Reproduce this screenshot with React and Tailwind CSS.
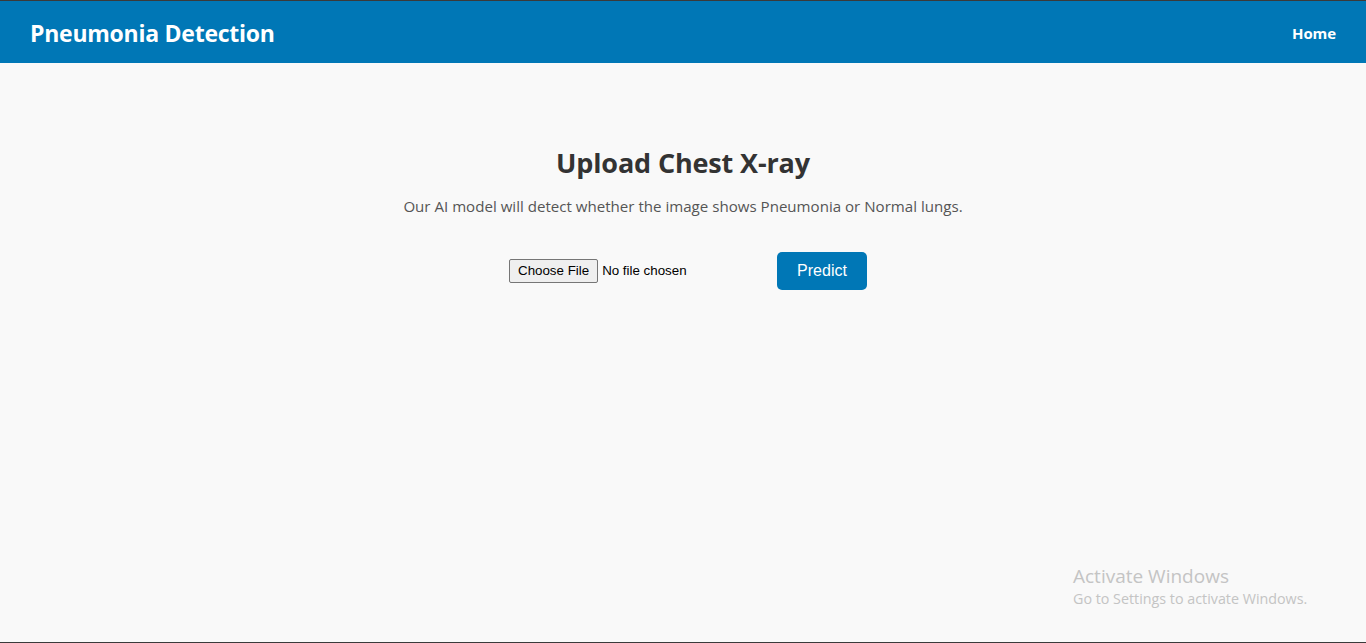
export default function App() {
  return (
    <div
      className="relative flex h-[643px] flex-col overflow-hidden border-t border-b border-[#3a3a3a] bg-[#f9f9f9]"
      style={{ fontFamily: '"Open Sans", "Noto Sans", sans-serif' }}
    >
      {/* Navbar */}
      <nav className="flex h-[62px] items-center justify-between bg-[#0077b6] px-[30px] pt-[2px] text-white">
        <h1 className="text-[23px] font-bold tracking-[-0.25px]">Pneumonia Detection</h1>
        <a href="#" className="text-[15px] font-bold tracking-[-0.1px]">Home</a>
      </nav>

      {/* Main */}
      <main className="flex flex-col items-center pt-[80px] text-center">
        <h2 className="text-[27px] font-bold leading-[40px] tracking-[-0.15px] text-[#333333]">Upload Chest X-ray</h2>
        <p className="mt-[12px] text-[15.1px] text-[#555555]">
          Our AI model will detect whether the image shows Pneumonia or Normal lungs.
        </p>

        <form className="mt-[34px] flex items-center pl-[10px]" onSubmit={(e) => e.preventDefault()}>
          <input
            type="file"
            className="w-[250px] text-[13.33px] text-black file:mr-[4px] file:rounded-[2px] file:border file:border-[#767676] file:bg-[#efefef] file:px-[8px] file:py-[1px] file:text-[13.33px] file:text-black"
            style={{ fontFamily: '"Liberation Sans", Arial, sans-serif' }}
          />
          <button
            type="submit"
            className="ml-[18px] h-[38px] w-[90px] rounded-[5px] bg-[#0077b6] text-[16px] text-white"
            style={{ fontFamily: '"Liberation Sans", Arial, sans-serif' }}
          >
            Predict
          </button>
        </form>
      </main>

      {/* Windows watermark */}
      <div className="absolute left-[1073px] top-[563px] text-[#c4c4c4]">
        <p className="text-[19px] leading-[24px]">Activate Windows</p>
        <p className="text-[14.3px] leading-[22px]">Go to Settings to activate Windows.</p>
      </div>
    </div>
  );
}
